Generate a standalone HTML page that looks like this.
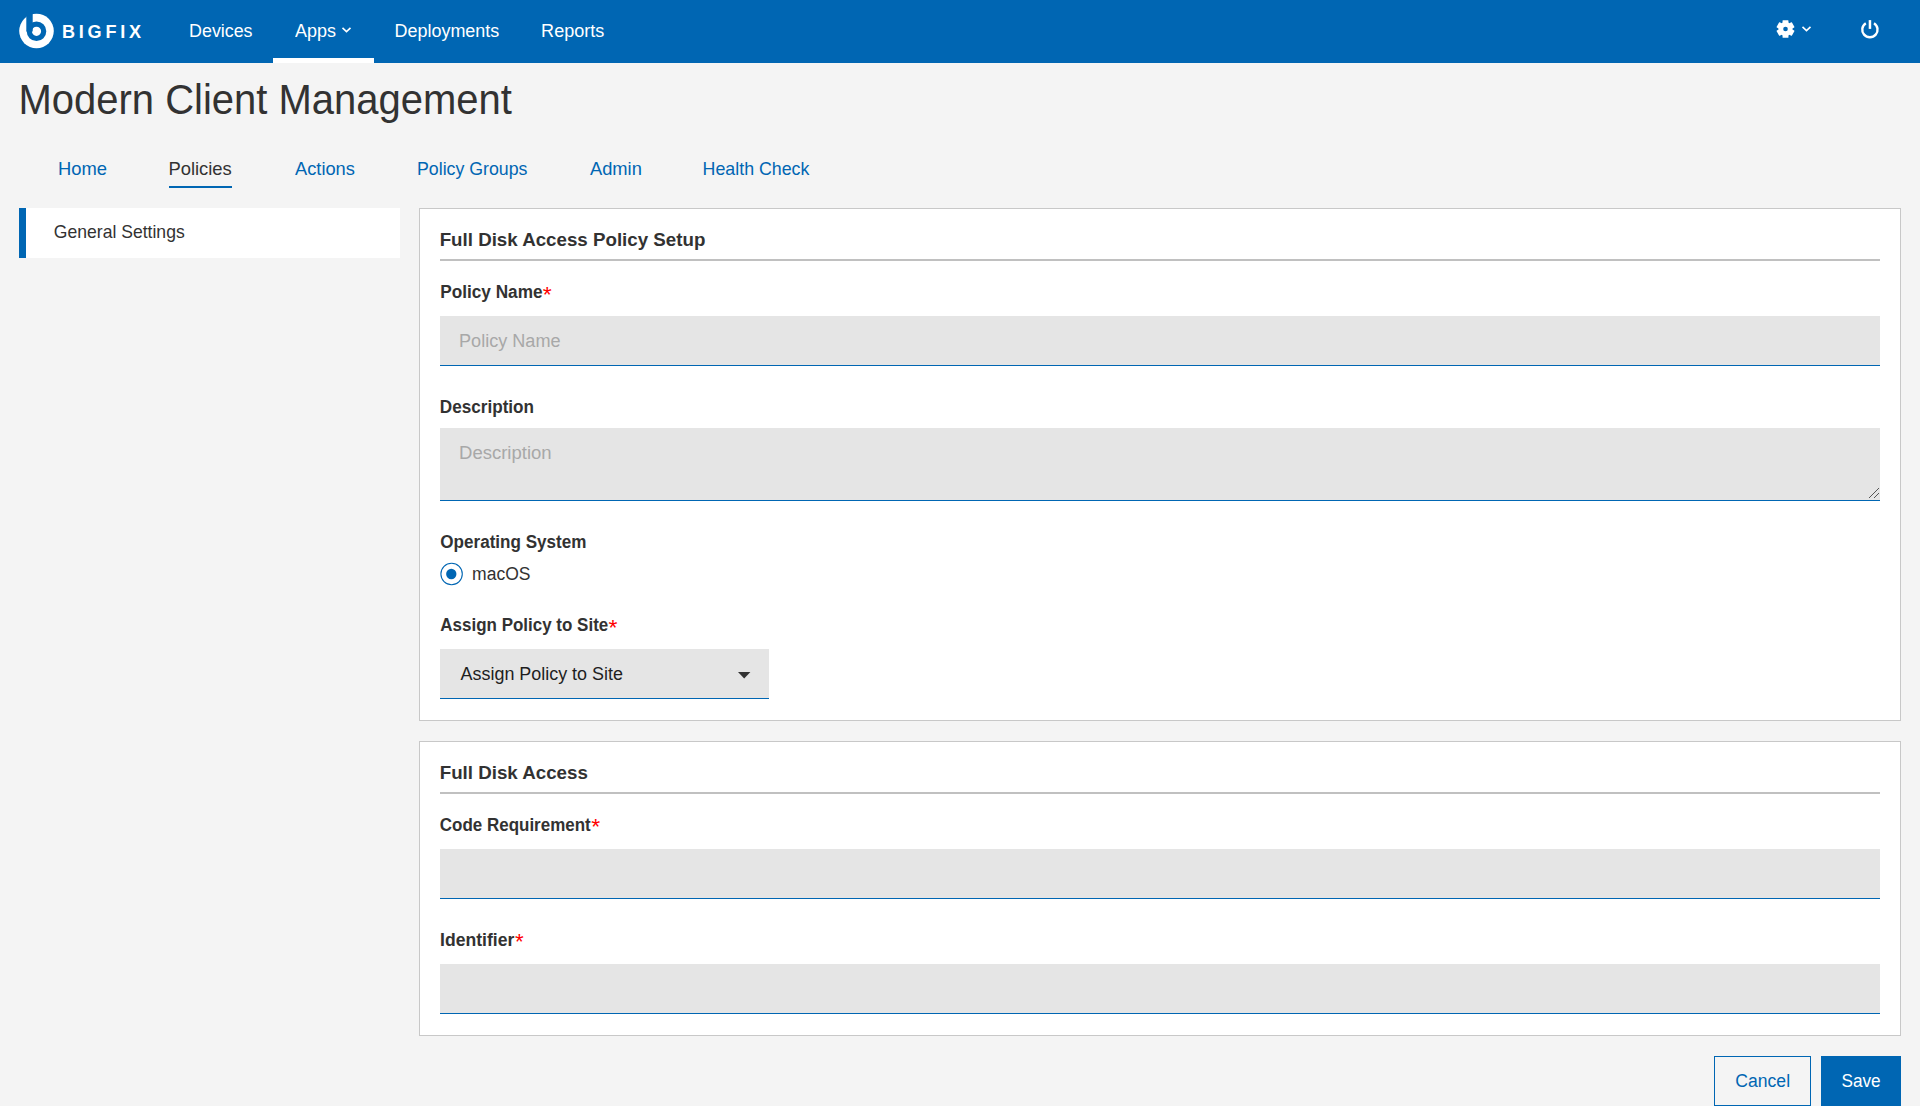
<!DOCTYPE html>
<html lang="en">
<head>
<meta charset="utf-8">
<title>Modern Client Management</title>
<style>
*{box-sizing:border-box;margin:0;padding:0}
html{background:#fff}
body{width:1920px;height:1117px;position:relative;overflow:hidden;background:#fff;font-family:"Liberation Sans",sans-serif;color:#323232}
.page{position:absolute;left:0;top:0;width:1920px;height:1106px;background:#f4f4f4}
.t{position:absolute;white-space:nowrap;line-height:1;transform-origin:0 0;font-weight:normal}
.b{font-weight:bold}
.w{color:#fff}
.bl{color:#0066b3}
.dk{color:#323232}
.ph{color:#a8a8a8}
.hdr{position:absolute;left:0;top:0;width:1920px;height:63px;background:#0066b3}
.appsbar{position:absolute;left:273px;top:58px;width:101px;height:5px;background:#fff}
.tabbar{position:absolute;left:169px;top:186px;width:63px;height:2px;background:#0066b3}
.side{position:absolute;left:19px;top:208px;width:381px;height:50px;background:#fff;border-left:7px solid #0066b3}
.panel{position:absolute;left:419px;width:1482px;background:#fff;border:1px solid #c8c8c8}
.hr{position:absolute;left:440px;width:1440px;height:2px;background:#c0c0c0}
.req{color:#ff0000}
.inp{position:absolute;left:440px;width:1440px;height:50px;background:#e5e5e5;border-bottom:1px solid #0066b3}
.btn{position:absolute;top:1056px;height:50px}
svg{position:absolute;overflow:visible}
</style>
</head>
<body>
<div class="page">

<div class="hdr"></div>
<div class="appsbar"></div>
<svg style="left:19px;top:13px" width="36" height="36" viewBox="0 0 36 36">
  <circle cx="17.5" cy="18" r="17.3" fill="#fff"/>
  <circle cx="17.5" cy="18.3" r="7.2" fill="none" stroke="#0066b3" stroke-width="5.2"/>
  <rect x="7.3" y="-1" width="6.4" height="19.5" fill="#0066b3"/>
</svg>
<span id="brand" class="t b w" style="letter-spacing:3.9px;left:61px;top:23px;font-size:18.5px;transform:translateX(0.88px) scaleX(0.9765)">BIGFIX</span>
<span id="nav1" class="t w" style="left:189px;top:22px;font-size:18.8px;transform:translateX(0.08px) scaleX(0.9498)">Devices</span>
<span id="nav2" class="t w" style="left:295px;top:22px;font-size:18.8px;transform:scaleX(0.9574)">Apps</span>
<svg style="left:341px;top:26px" width="11" height="8" viewBox="0 0 11 8"><path d="M1.5 1.8 L5.5 5.6 L9.5 1.8" fill="none" stroke="#fff" stroke-width="1.6"/></svg>
<span id="nav3" class="t w" style="left:394px;top:22px;font-size:18.8px;transform:translateX(0.51px) scaleX(0.9560)">Deployments</span>
<span id="nav4" class="t w" style="left:541px;top:22px;font-size:18.8px;transform:translateX(0.11px) scaleX(0.9600)">Reports</span>
<!-- gear -->
<svg style="left:1776px;top:19px" width="19" height="20" viewBox="-10 -10 20 20">
  <g fill="#fff">
    <circle r="7.4"/>
    <rect x="-3.1" y="-9.3" width="6.2" height="18.6" rx="0.6"/>
    <rect x="-3.1" y="-9.3" width="6.2" height="18.6" rx="0.6" transform="rotate(60)"/>
    <rect x="-3.1" y="-9.3" width="6.2" height="18.6" rx="0.6" transform="rotate(120)"/>
  </g>
  <circle r="2.45" fill="#0066b3"/>
</svg>
<svg style="left:1801px;top:25px" width="11" height="8" viewBox="0 0 11 8"><path d="M1.5 1.8 L5.5 5.6 L9.5 1.8" fill="none" stroke="#fff" stroke-width="1.6"/></svg>
<!-- power -->
<svg style="left:1860px;top:19px" width="20" height="20" viewBox="0 0 20 20">
  <path d="M5.8 4.15 A7.65 7.65 0 1 0 14.0 4.15" fill="none" stroke="#fff" stroke-width="2.4"/>
  <path d="M9.95 1.1 L9.95 9.9" stroke="#fff" stroke-width="2.5"/>
</svg>

<h1 id="h1" class="t dk" style="left:18px;top:79px;font-size:42px;transform:translateX(0.51px) scaleX(0.9517)">Modern Client Management</h1>

<span id="tab1" class="t bl" style="left:58px;top:160px;font-size:18.6px;transform:translateX(0.02px) scaleX(0.9887)">Home</span>
<span id="tab2" class="t dk" style="left:168px;top:160px;font-size:18.6px;transform:translateX(0.40px) scaleX(0.9897)">Policies</span>
<span id="tab3" class="t bl" style="left:295px;top:160px;font-size:18.6px;transform:scaleX(0.9818)">Actions</span>
<span id="tab4" class="t bl" style="left:417px;top:160px;font-size:18.6px;transform:translateX(0.01px) scaleX(0.9537)">Policy Groups</span>
<span id="tab5" class="t bl" style="left:589px;top:160px;font-size:18.6px;transform:translateX(0.95px) scaleX(0.9847)">Admin</span>
<span id="tab6" class="t bl" style="left:702px;top:160px;font-size:18.6px;transform:translateX(0.61px) scaleX(0.9569)">Health Check</span>
<div class="tabbar"></div>

<div class="side"></div>
<span id="side" class="t dk" style="left:53px;top:223px;font-size:18.5px;transform:translateX(0.85px) scaleX(0.9494)">General Settings</span>

<div class="panel" style="top:208px;height:513px"></div>
<span id="pt1" class="t b dk" style="left:439px;top:231px;font-size:18.8px;transform:translateX(0.65px) scaleX(0.9969)">Full Disk Access Policy Setup</span>
<div class="hr" style="top:259px"></div>
<span id="l1" class="t b dk" style="left:440px;top:283px;font-size:18px;transform:translateX(0.28px) scaleX(0.9546)">Policy Name</span><span id="a1" class="t req" style="left:542px;top:283px;font-size:22.8px;transform:translateX(0.77px) scaleX(1.0064)">*</span>
<div class="inp" style="top:316px"></div>
<span id="ph1" class="t ph" style="left:459px;top:332px;font-size:18px;transform:translateX(0.04px) scaleX(1.0046)">Policy Name</span>
<span id="l2" class="t b dk" style="left:439px;top:398px;font-size:18px;transform:translateX(0.81px) scaleX(0.9513)">Description</span>
<div class="inp" style="top:428px;height:73px"></div>
<svg style="left:1868px;top:487px" width="12" height="12" viewBox="0 0 12 12"><path d="M1 11 L11 1 M6 11 L11 6" stroke="#555" stroke-width="1"/></svg>
<span id="ph2" class="t ph" style="left:459px;top:444px;font-size:18px;transform:translateX(0.01px) scaleX(1.0283)">Description</span>
<span id="l3" class="t b dk" style="left:440px;top:533px;font-size:18px;transform:translateX(0.29px) scaleX(0.9485)">Operating System</span>
<svg style="left:439px;top:562px" width="24" height="24" viewBox="0 0 24 24"><circle cx="12.6" cy="12" r="10.7" fill="#fff" stroke="#0066b3" stroke-width="1.1"/><circle cx="12.3" cy="12" r="5.15" fill="#0066b3"/></svg>
<span id="mac" class="t dk" style="left:472px;top:565px;font-size:18px;transform:translateX(0.08px) scaleX(0.9735)">macOS</span>
<span id="l4" class="t b dk" style="left:440px;top:616px;font-size:18px;transform:translateX(0.36px) scaleX(0.9428)">Assign Policy to Site</span><span id="a4" class="t req" style="left:608px;top:616px;font-size:22.8px;transform:translateX(0.58px) scaleX(1.0073)">*</span>
<div class="inp" style="top:649px;width:329px"></div>
<span id="sel" class="t" style="color:#1e1e1e;left:460px;top:665px;font-size:18px;transform:translateX(0.55px) scaleX(0.9957)">Assign Policy to Site</span>
<svg style="left:737px;top:671px" width="14" height="8" viewBox="0 0 14 8"><path d="M1 1 L13.4 1 L7.2 7.4Z" fill="#333"/></svg>

<div class="panel" style="top:741px;height:295px"></div>
<span id="pt2" class="t b dk" style="left:439px;top:764px;font-size:18.8px;transform:translateX(0.70px) scaleX(0.9972)">Full Disk Access</span>
<div class="hr" style="top:792px"></div>
<span id="l5" class="t b dk" style="left:439px;top:816px;font-size:18px;transform:translateX(0.84px) scaleX(0.9427)">Code Requirement</span><span id="a5" class="t req" style="left:591px;top:815px;font-size:22.8px;transform:translateX(0.30px) scaleX(1.0065)">*</span>
<div class="inp" style="top:849px"></div>
<span id="l6" class="t b dk" style="left:440px;top:931px;font-size:18px;transform:translateX(0.04px) scaleX(0.9765)">Identifier</span><span id="a6" class="t req" style="left:514px;top:930px;font-size:22.8px;transform:translateX(0.99px) scaleX(0.9768)">*</span>
<div class="inp" style="top:964px"></div>

<div class="btn" style="left:1714px;width:97px;border:1px solid #0066b3;background:#f4f4f4"></div>
<span id="cancel" class="t bl" style="left:1735px;top:1072px;font-size:18.8px;transform:translateX(0.36px) scaleX(0.9351)">Cancel</span>
<div class="btn" style="left:1821px;width:80px;background:#0066b3"></div>
<span id="save" class="t w" style="left:1841px;top:1072px;font-size:18.8px;transform:translateX(0.49px) scaleX(0.9152)">Save</span>

</div>
</body>
</html>
